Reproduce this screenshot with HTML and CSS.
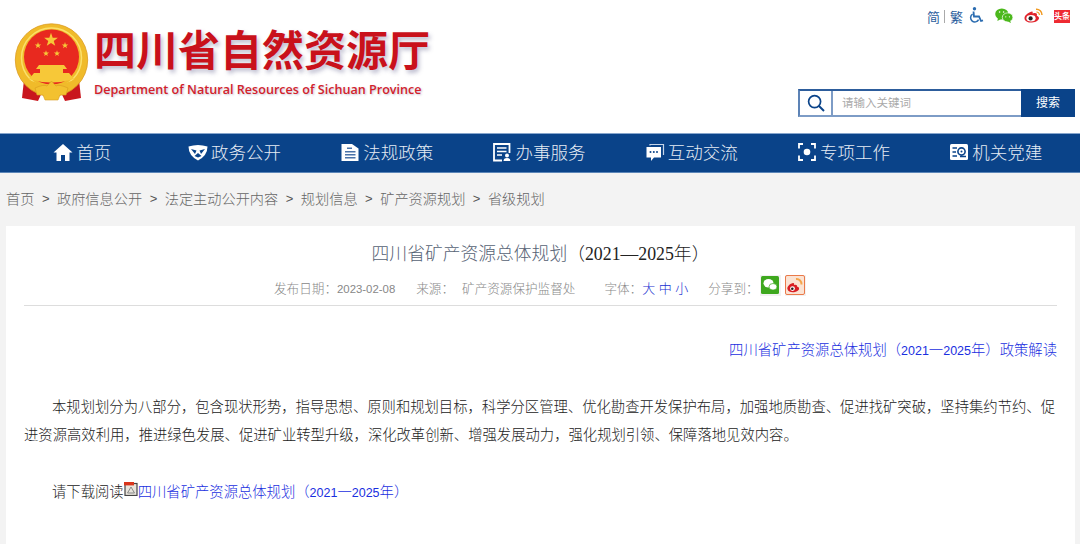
FILE: index.html
```html
<!DOCTYPE html>
<html lang="zh-CN">
<head>
  <meta charset="UTF-8">
  <title>四川省矿产资源总体规划（2021—2025年）</title>
  <link rel="stylesheet" href="styles.css">
</head>
<body>
  <header class="header">
    <div class="logo">
      <svg class="emblem" viewBox="0 0 76 82" width="76" height="82">
        <defs>
          <polygon id="star" points="0,-1 .235,-.324 .951,-.309 .38,.124 .588,.809 0,.4 -.588,.809 -.38,.124 -.951,-.309 -.235,-.324" fill="#f7c838"/>
        </defs>
        <path d="M10 58 L8 76 L24 79 L30 66 Z" fill="#c9161d"/>
        <path d="M65 58 L67 76 L51 79 L45 66 Z" fill="#c9161d"/>
        <circle cx="37.5" cy="38" r="36.2" fill="#f0bb2a" stroke="#dc9a1e" stroke-width=".8"/>
        <circle cx="37.5" cy="36" r="30" fill="none" stroke="#fbe06a" stroke-width="1.5"/>
        <circle cx="37.5" cy="35" r="27.5" fill="#e8291f"/>
        <use href="#star" transform="translate(37 18) scale(7.2)"/>
        <use href="#star" transform="translate(24 23.5) scale(3.4)"/>
        <use href="#star" transform="translate(51 23.5) scale(3.4)"/>
        <use href="#star" transform="translate(32 31.5) scale(3.2)"/>
        <use href="#star" transform="translate(43 31.5) scale(3.2)"/>
        <path d="M25 43 H50 L53 47 H49 V51 H55 L60 57 Q37.5 64 15 57 L20 51 H26 V47 H22 Z" fill="#f7c838"/>
        <path d="M12 57 Q37.5 68 63 57 L60 64 Q37.5 72 15 64 Z" fill="#f0bb2a"/>
        <path d="M21 66 Q30 62 33 64 L37.5 59 L42 64 Q45 62 54 66 L52 73 H46 L44 78 H31 L29 73 H23 Z" fill="#f3c12f" stroke="#d99a1e" stroke-width=".6"/>
      </svg>
      <div class="logo-text">
        <div class="logo-cn">四川省自然资源厅</div>
        <div class="logo-en">Department of Natural Resources of Sichuan Province</div>
      </div>
    </div>
    <div class="header-right">
      <div class="tools">
        <a class="tool-link">简</a><span class="tool-sep"></span><a class="tool-link">繁</a>
        <svg class="tool-access" viewBox="0 0 15 16" width="15" height="16">
          <circle cx="5.5" cy="1.8" r="1.7" fill="#2b6cb0"/>
          <path d="M4.5 4.5 L5 9.5 H10 L12 14 L14 13.3" fill="none" stroke="#2b6cb0" stroke-width="1.8"/>
          <path d="M3.6 7.2 A4.2 4.2 0 1 0 9.6 12.6" fill="none" stroke="#2b6cb0" stroke-width="1.5"/>
        </svg>
        <svg class="tool-wechat" viewBox="0 0 18 15" width="18" height="15">
          <ellipse cx="6.8" cy="6" rx="6.6" ry="5.6" fill="#4cb81c"/>
          <path d="M3 9.5 L2.4 13 L6.5 10.8 Z" fill="#4cb81c"/>
          <ellipse cx="12.6" cy="9.4" rx="5.3" ry="4.5" fill="#4cb81c" stroke="#fff" stroke-width=".7"/>
          <path d="M15 12.6 L16 15 L12.8 13.4 Z" fill="#4cb81c"/>
          <circle cx="4.6" cy="4" r=".8" fill="#fff"/><circle cx="8.6" cy="4" r=".8" fill="#fff"/>
          <circle cx="10.8" cy="8.8" r=".6" fill="#fff"/><circle cx="14.4" cy="8.8" r=".6" fill="#fff"/>
        </svg>
        <svg class="tool-weibo" viewBox="0 0 19 15" width="19" height="15">
          <path d="M8 3.6 C3.5 4.6 .4 8 .5 10.4 C.7 13.2 4.4 14.8 8 14.6 C12.4 14.3 15.4 11.8 15 9.8 C14.7 8.4 13.4 8.2 12.8 7.8 C13.4 6.2 12.8 4.8 10.4 5 C9.4 5.1 8.8 5.4 8.6 5.4 C8.8 4.4 8.8 3.4 8 3.6 Z" fill="#e0242c"/>
          <ellipse cx="7" cy="10.2" rx="4.6" ry="3.3" fill="#fff"/>
          <circle cx="6.6" cy="10.4" r="2.1" fill="#222"/>
          <path d="M12 1.2 A5.6 5.6 0 0 1 18 7" fill="none" stroke="#f19a22" stroke-width="1.5"/>
          <path d="M12.4 4 A2.8 2.8 0 0 1 15.4 7" fill="none" stroke="#f19a22" stroke-width="1.2"/>
        </svg>
        <span class="tool-toutiao">头条</span>
      </div>
      <form class="search">
        <span class="search-icon">
          <svg viewBox="0 0 18 18" width="18" height="18">
            <circle cx="7.6" cy="7.6" r="6" fill="none" stroke="#0a4389" stroke-width="1.7"/>
            <path d="M12 12 L17 17" stroke="#0a4389" stroke-width="2"/>
          </svg>
        </span>
        <span class="search-input">请输入关键词</span>
        <span class="search-btn">搜索</span>
      </form>
    </div>
  </header>

  <nav class="nav">
    <a class="nav-item">
      <svg viewBox="0 0 20 20" width="20" height="20"><path d="M10 2 L19.5 10.5 H16.5 V19 H12 V13 H8 V19 H3.5 V10.5 H.5 Z" fill="#fff"/></svg>
      首页
    </a>
    <a class="nav-item">
      <svg viewBox="0 0 20 20" width="20" height="20"><path d="M.5 4.5 Q10 1.5 19.5 4.5 Q19.5 13.5 10 18.5 Q.5 13.5 .5 4.5 Z" fill="#fff"/><path d="M3 7 L8.5 8.5 L7 12 Z M17 7 L11.5 8.5 L13 12 Z M6.5 14 L10 11 L13.5 14 L10 15.5 Z" fill="#0a4389"/></svg>
      政务公开
    </a>
    <a class="nav-item">
      <svg viewBox="0 0 20 20" width="20" height="20"><path d="M1.5 2 H12 L18.5 6.5 V19 H1.5 Z" fill="#fff"/><path d="M5 9 H15.5 V10.4 H5 Z M5 12 H15.5 V13.4 H5 Z M5 15 H15.5 V16.4 H5 Z M7 5.5 H12 V7 H7 Z" fill="#4a72a8"/></svg>
      法规政策
    </a>
    <a class="nav-item">
      <svg viewBox="0 0 20 20" width="20" height="20"><path d="M17.5 11 V2 H2 V18.5 H10" fill="none" stroke="#fff" stroke-width="1.8"/><path d="M5 6 H14.5 M5 9.5 H14.5 M5 13 H10" stroke="#fff" stroke-width="1.6"/><circle cx="15" cy="13.5" r="2" fill="#fff"/><path d="M11.5 19 Q11.5 16 15 16 Q18.5 16 18.5 19 Z" fill="#fff"/></svg>
      办事服务
    </a>
    <a class="nav-item">
      <svg viewBox="0 0 20 20" width="20" height="20"><path d="M5 3.5 V2.5 H18.5 V13" fill="none" stroke="#c6d5e8" stroke-width="1.2"/><path d="M1.5 5 H16 V15.5 H9 L6 19 V15.5 H1.5 Z" fill="#fff"/><circle cx="5.5" cy="10" r="1" fill="#0a4389"/><circle cx="8.8" cy="10" r="1" fill="#0a4389"/><circle cx="12" cy="10" r="1" fill="#0a4389"/></svg>
      互动交流
    </a>
    <a class="nav-item">
      <svg viewBox="0 0 20 20" width="20" height="20"><path d="M6 2 H2 V6.5 M14 2 H18 V6.5 M6 18 H2 V13.5 M14 18 H18 V13.5" fill="none" stroke="#fff" stroke-width="1.8"/><circle cx="10" cy="10" r="3.3" fill="#fff"/></svg>
      专项工作
    </a>
    <a class="nav-item">
      <svg viewBox="0 0 20 20" width="20" height="20"><rect x="1" y="2" width="18" height="16" rx="1.5" fill="#fff"/><path d="M3.5 6 H8 M3.5 10 H7 M3.5 14 H8" stroke="#0a4389" stroke-width="1.5"/><circle cx="12.5" cy="9.5" r="3.6" fill="none" stroke="#0a4389" stroke-width="1.6"/><circle cx="12.5" cy="9.5" r="1" fill="#0a4389"/><path d="M11 14.5 H17" stroke="#0a4389" stroke-width="1.5"/></svg>
      机关党建
    </a>
  </nav>

  <div class="crumbs">
    <a>首页</a><span class="gt">&gt;</span><a>政府信息公开</a><span class="gt">&gt;</span><a>法定主动公开内容</a><span class="gt">&gt;</span><a>规划信息</a><span class="gt">&gt;</span><a>矿产资源规划</a><span class="gt">&gt;</span><a>省级规划</a>
  </div>

  <main class="card">
    <h1 class="title">四川省矿产资源总体规划<span class="title-tail">（2021—2025年）</span></h1>
    <div class="meta">
      <span class="meta-date">发布日期：<span class="meta-num">2023-02-08</span></span>
      <span class="meta-source">来源：</span>
      <span class="meta-org">矿产资源保护监督处</span>
      <span class="meta-font">字体：<a class="size-link">大</a> <a class="size-link">中</a> <a class="size-link">小</a></span>
      <span class="meta-share">分享到：</span>
      <span class="share-icon share-wechat">
        <svg viewBox="0 0 18 18" width="18" height="18">
          <rect width="18" height="18" rx="1.5" fill="#3ea81e"/>
          <ellipse cx="7.5" cy="7.2" rx="5" ry="4.2" fill="#fff"/>
          <ellipse cx="12" cy="10.8" rx="4" ry="3.3" fill="#fff" stroke="#3ea81e" stroke-width=".7"/>
        </svg>
      </span>
      <span class="share-icon share-weibo">
        <svg viewBox="0 0 20 20" width="20" height="20">
          <rect x=".5" y=".5" width="19" height="19" rx="1.5" fill="#fbe3d3" stroke="#ea7a4a"/>
          <path d="M8 8 C4 9 2 12 2.4 14 C3 17 7 17.6 10 17 C13 16.4 14.6 14.4 14 13 C13.6 12 12.6 12 12 11.6 C12.4 10 11 9.2 9 10 C9.4 8.6 9 7.8 8 8 Z" fill="#d81e24"/>
          <circle cx="7.5" cy="13.6" r="2.4" fill="#fff"/><circle cx="7.3" cy="13.8" r="1.3" fill="#222"/>
          <path d="M11 4 A5 5 0 0 1 16.5 9.5" fill="none" stroke="#f5a54a" stroke-width="2"/>
        </svg>
      </span>
    </div>
    <div class="article">
      <p class="policy"><a>四川省矿产资源总体规划（<span class="num">2021</span>一<span class="num">2025</span>年）政策解读</a></p>
      <p class="para">本规划划分为八部分，包含现状形势，指导思想、原则和规划目标，科学分区管理、优化勘查开发保护布局，加强地质勘查、促进找矿突破，坚持集约节约、促进资源高效利用，推进绿色发展、促进矿业转型升级，深化改革创新、增强发展动力，强化规划引领、保障落地见效内容。</p>
      <p class="para download">请下载阅读<svg class="pdf" viewBox="0 0 14 14" width="14" height="14"><rect x="1" y="1.5" width="12" height="12" fill="#e8e4dc" stroke="#444" stroke-width="1.2"/><path d="M3.5 11 L7 5 L10.5 11 Z" fill="none" stroke="#888" stroke-width="1"/><rect x="0" y="0" width="10" height="3.4" fill="#d9351c"/></svg><a>四川省矿产资源总体规划（<span class="num">2021</span>一<span class="num">2025</span>年）</a></p>
    </div>
  </main>
</body>
</html>
```

FILE: styles.css
```css
* {
  box-sizing: border-box;
}

body {
  margin: 0;
  background: #f3f3f3;
  font-family: "Liberation Sans", "Noto Sans CJK SC", sans-serif;
  color: #333;
  height: 544px;
  overflow: hidden;
}

.header {
  background: #fff;
  height: 133px;
  display: flex;
  justify-content: space-between;
  padding: 22px 5px 0 14px;
}

.logo {
  display: flex;
  align-items: flex-start;
  gap: 4px;
}

.emblem {
  flex: none;
}

.logo-cn {
  font-family: "Noto Sans CJK SC", sans-serif;
  font-size: 42px;
  font-weight: 700;
  line-height: 52px;
  color: #c9111b;
  text-shadow: 2px 3px 4px rgba(70, 70, 120, 0.35);
}

.logo-en {
  font-family: "Open Sans", sans-serif;
  font-size: 12.6px;
  font-weight: 600;
  line-height: 18px;
  margin-top: 7px;
  color: #d2222b;
  text-shadow: 1px 1px 2px rgba(70, 70, 120, 0.3);
  white-space: nowrap;
}

.header-right {
  display: flex;
  flex-direction: column;
  align-items: flex-end;
  margin-top: -14px;
}

.tools {
  display: flex;
  align-items: center;
  height: 18px;
  margin-top: -1px;
  padding-right: 5px;
  font-size: 13px;
  color: #2a5c9c;
}

.tool-sep {
  width: 1px;
  height: 13px;
  background: #aaa;
  margin: 0 5px 0 4px;
}

.tool-access {
  margin: -2px 0 0 6px;
}

.tool-wechat {
  margin: -2px 0 0 11px;
}

.tool-weibo {
  margin: -2px 0 0 11px;
}

.tool-toutiao {
  margin: 0 0 0 11px;
  width: 16px;
  height: 13px;
  background: #ee2a32;
  color: #fff;
  font-size: 8px;
  line-height: 13px;
  text-align: center;
  white-space: nowrap;
  overflow: hidden;
  font-weight: 700;
}

.search {
  display: flex;
  width: 277px;
  height: 28px;
  margin-top: 64px;
  border: 2px solid #7d9cc6;
  border-top-color: #2d5d9c;
  border-left-color: #5d83b6;
  background: #fff;
}

.search-icon {
  width: 33px;
  flex: none;
  display: flex;
  align-items: center;
  justify-content: center;
  border-right: 2px solid #7d9cc6;
}

.search-input {
  flex: 1;
  padding-left: 9px;
  font-size: 11.5px;
  line-height: 25px;
  color: #aaa;
}

.search-btn {
  width: 54px;
  flex: none;
  margin: -2px -2px -2px 0;
  background: #0a4389;
  color: #fff;
  font-size: 12px;
  line-height: 28px;
  text-align: center;
}

.nav {
  height: 40px;
  background: #0a4389;
  border-top: 1px solid #86a5cc;
  border-bottom: 1px solid #5c86b8;
  display: grid;
  grid-template-columns: repeat(7, 1fr);
  padding: 0 8px 0 6px;
}

.nav-item {
  display: flex;
  align-items: center;
  justify-content: center;
  gap: 3px;
  padding-bottom: 3px;
  color: #e6ecf4;
  font-size: 17.5px;
  font-weight: 300;
}

.crumbs {
  height: 53px;
  display: flex;
  align-items: center;
  padding: 0 0 3px 6px;
  font-size: 14.2px;
  color: #666;
  font-weight: 300;
}

.gt {
  color: #555;
  width: 22.6px;
  text-align: center;
  font-size: 13px;
}

.card {
  margin: 0 5px 0 6px;
  background: #fff;
  padding: 0 18px;
  height: 318px;
}

.title {
  margin: 0;
  padding-top: 15px;
  height: 47px;
  font-family: "Liberation Serif", "Noto Sans CJK SC", serif;
  font-size: 17.8px;
  font-weight: 300;
  line-height: 26px;
  text-align: center;
  color: #566274;
}

.title-tail {
  color: #222;
}

.meta {
  display: flex;
  align-items: center;
  height: 33px;
  padding: 0 0 4px 250px;
  border-bottom: 1px solid #ddd;
  font-size: 12.6px;
  font-weight: 300;
  color: #888;
  white-space: nowrap;
}

.meta-num {
  font-size: 11.4px;
}

.meta-source {
  margin-left: 21px;
}

.meta-org {
  margin-left: 8px;
}

.meta-font {
  margin-left: 29px;
}

.meta-share {
  margin-left: 20px;
}

.size-link {
  color: #1a2fd0;
  font-size: 13px;
}

.share-icon {
  display: flex;
  width: 21px;
  height: 21px;
  align-items: center;
  justify-content: center;
  background: #f2f2f2;
  margin-top: -4px;
}

.share-wechat {
  margin-left: 1px;
}

.share-weibo {
  margin-left: 4px;
}

.article {
  font-size: 14.34px;
  line-height: 28.6px;
  color: #222;
  font-weight: 300;
}

.policy {
  margin: 30px 0 0;
  text-align: right;
}

.policy a,
.download a {
  color: #1a2fe0;
}

.num {
  font-size: 12.5px;
}

.para {
  margin: 27px 0 0;
  text-indent: 28px;
}

.download {
  margin-top: 28px;
}

.pdf {
  vertical-align: 1px;
}
```
